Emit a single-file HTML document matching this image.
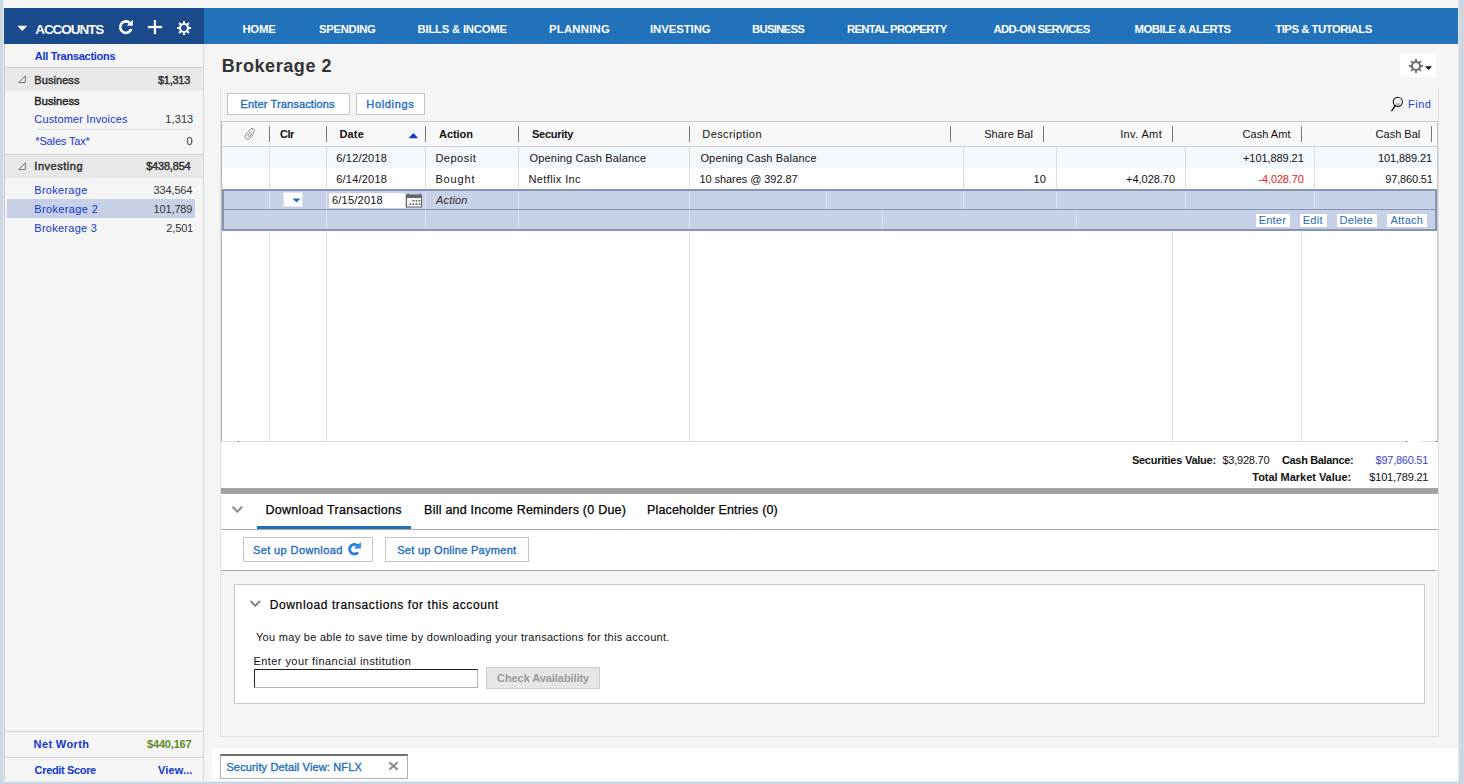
<!DOCTYPE html>
<html><head><meta charset="utf-8">
<style>
*{box-sizing:border-box;margin:0;padding:0}
html,body{width:1464px;height:784px;overflow:hidden;background:#f5f5f5;font-family:"Liberation Sans",sans-serif}
.a{position:absolute}
.t{position:absolute;white-space:nowrap;line-height:normal}
</style></head><body>
<!-- frame strips -->
<div class="a" style="left:0;top:0;width:3px;height:784px;background:#cdd7e1"></div>
<div class="a" style="left:3px;top:0;width:1px;height:782px;background:#e2ebf3"></div>
<div class="a" style="left:1459px;top:0;width:5px;height:784px;background:#cdd7e1"></div>
<div class="a" style="left:1458px;top:0;width:1px;height:782px;background:#e2ebf3"></div>
<div class="a" style="left:0;top:782px;width:1464px;height:2px;background:#cdd7e1"></div>
<div class="a" style="left:3px;top:781px;width:1456px;height:1px;background:#e2ebf3"></div>

<!-- header bars -->
<div class="a" style="left:4px;top:8px;width:200px;height:36px;background:#1a4a8b"></div>
<div class="a" style="left:204px;top:8px;width:1254px;height:36px;background:#2272bb"></div>
<!-- accounts triangle -->
<svg class="a" style="left:17px;top:25px" width="11" height="7" viewBox="0 0 11 7"><path d="M0.3 0.8 L10.3 0.8 L5.3 6 Z" fill="#fff"/></svg>
<!-- refresh -->
<svg class="a" style="left:116px;top:17px" width="20" height="20" viewBox="0 0 20 20">
<path d="M15.26 12.05 A5.7 5.7 0 1 1 14.14 6.29" fill="none" stroke="#fff" stroke-width="2.6"/>
<path d="M10.7 8.8 L16.9 8.8 L16.9 2.8 Z" fill="#fff"/>
</svg>
<!-- plus -->
<svg class="a" style="left:147px;top:19px" width="17" height="17" viewBox="0 0 17 17">
<rect x="0.8" y="6.9" width="14.3" height="2.3" fill="#fff"/><rect x="6.8" y="1" width="2.3" height="14.2" fill="#fff"/>
</svg>
<!-- gear white -->
<svg class="a" style="left:176px;top:20px" width="16" height="16" viewBox="0 0 16 16">
<g transform="translate(8,8)" fill="#fff">
<circle r="5.1"/>
<rect x="-1" y="-7" width="2" height="14"/>
<rect x="-1" y="-7" width="2" height="14" transform="rotate(45)"/>
<rect x="-1" y="-7" width="2" height="14" transform="rotate(90)"/>
<rect x="-1" y="-7" width="2" height="14" transform="rotate(135)"/>
<circle r="2.9" fill="#1a4a8b"/>
</g></svg>

<!-- sidebar -->
<div class="a" style="left:203px;top:44px;width:1px;height:737px;background:#d6d6d6"></div>
<div class="a" style="left:4px;top:67px;width:199px;height:1px;background:#cccccc"></div>
<div class="a" style="left:4px;top:68px;width:199px;height:23px;background:#e8e8e8"></div>
<div class="a" style="left:37px;top:129px;width:154px;height:1px;background:#d8d8d8"></div>
<div class="a" style="left:4px;top:154px;width:199px;height:1px;background:#d2d2d2"></div>
<div class="a" style="left:4px;top:155px;width:199px;height:23px;background:#e8e8e8"></div>
<div class="a" style="left:7px;top:199px;width:188px;height:19px;background:#c6d1e7"></div>
<svg class="a" style="left:18px;top:75px" width="9" height="9" viewBox="0 0 9 9"><path d="M7.4 0.8 L7.4 7.5 L0.8 7.5 Z" fill="none" stroke="#777" stroke-width="1"/></svg>
<svg class="a" style="left:18px;top:162px" width="9" height="9" viewBox="0 0 9 9"><path d="M7.4 0.8 L7.4 7.5 L0.8 7.5 Z" fill="none" stroke="#777" stroke-width="1"/></svg>
<div class="a" style="left:4px;top:731px;width:199px;height:1px;background:#d2d2d2"></div>
<div class="a" style="left:4px;top:757px;width:199px;height:1px;background:#d2d2d2"></div>

<!-- title gear button -->
<div class="a" style="left:1400px;top:54px;width:36px;height:23px;background:#fff"></div>
<svg class="a" style="left:1408px;top:58px" width="16" height="16" viewBox="0 0 16 16">
<g transform="translate(8,8)" fill="#707070">
<circle r="5.1"/>
<rect x="-1" y="-6.9" width="2" height="13.8"/>
<rect x="-1" y="-6.9" width="2" height="13.8" transform="rotate(45)"/>
<rect x="-1" y="-6.9" width="2" height="13.8" transform="rotate(90)"/>
<rect x="-1" y="-6.9" width="2" height="13.8" transform="rotate(135)"/>
<circle r="3" fill="#fff"/>
</g></svg>
<svg class="a" style="left:1425px;top:66px" width="8" height="6" viewBox="0 0 8 6"><path d="M0 0.2 L7 0.2 L3.5 4 Z" fill="#111"/></svg>

<!-- panel borders -->
<div class="a" style="left:220px;top:88px;width:1px;height:648px;background:#e0e0e0"></div>
<div class="a" style="left:1438px;top:88px;width:1px;height:648px;background:#e0e0e0"></div>
<div class="a" style="left:220px;top:736px;width:1219px;height:1px;background:#e0e0e0"></div>

<!-- toolbar buttons -->
<div class="a" style="left:227px;top:93px;width:123px;height:22px;background:#fff;border:1px solid #c4c4c4"></div>
<div class="a" style="left:356px;top:93px;width:69px;height:22px;background:#fff;border:1px solid #c4c4c4"></div>
<!-- find icon -->
<svg class="a" style="left:1390px;top:96px" width="14" height="17" viewBox="0 0 14 17">
<circle cx="7.8" cy="5.8" r="4.6" fill="none" stroke="#111" stroke-width="1.1"/>
<path d="M6 7.6 Q7.8 9 9.6 7.6" fill="none" stroke="#555" stroke-width="0.8"/>
<path d="M5.2 9.6 L1.9 14.6" stroke="#111" stroke-width="1.5" stroke-linecap="round"/>
</svg>

<!-- table -->
<div class="a" style="left:221px;top:121px;width:1217px;height:321px;background:#fff;border:1px solid #c8c8c8;border-left:1px solid #b8b8b8;border-bottom:1px solid #dcdcdc"></div>
<div class="a" style="left:222px;top:122px;width:1215px;height:24px;background:#f8f8f8"></div>
<div class="a" style="left:222px;top:146px;width:1215px;height:1px;background:#cfcfcf"></div>
<div class="a" style="left:222px;top:147px;width:1215px;height:21px;background:#f3f8fc"></div>
<!-- header separators -->
<div class="a" style="left:269px;top:126px;width:1px;height:16px;background:#777"></div>
<div class="a" style="left:326px;top:126px;width:1px;height:16px;background:#777"></div>
<div class="a" style="left:425px;top:126px;width:1px;height:16px;background:#777"></div>
<div class="a" style="left:518px;top:126px;width:1px;height:16px;background:#777"></div>
<div class="a" style="left:689px;top:126px;width:1px;height:16px;background:#777"></div>
<div class="a" style="left:950px;top:126px;width:1px;height:16px;background:#777"></div>
<div class="a" style="left:1043px;top:126px;width:1px;height:16px;background:#777"></div>
<div class="a" style="left:1172px;top:126px;width:1px;height:16px;background:#777"></div>
<div class="a" style="left:1301px;top:126px;width:1px;height:16px;background:#777"></div>
<div class="a" style="left:1431px;top:126px;width:1px;height:16px;background:#777"></div>
<!-- paperclip -->
<svg class="a" style="left:238px;top:122px" width="20" height="22" viewBox="0 0 20 22">
<path d="M15.6 12.3 L11.7 16.3 A2.7 2.7 0 0 1 7.5 12.9 L12.7 7.2 A2.1 2.1 0 0 1 16.0 9.9 L11.9 14.2 A1.1 1.1 0 0 1 10.3 12.7 L13.2 9.6" fill="none" stroke="#7a7a7a" stroke-width="0.9"/>
</svg>
<!-- sort arrow -->
<svg class="a" style="left:408px;top:132px" width="11" height="7" viewBox="0 0 11 7"><path d="M0.6 6.3 L10.2 6.3 L5.4 1 Z" fill="#0b3cc4"/></svg>

<!-- body column lines rows -->
<div class="a" style="left:269px;top:147px;width:1px;height:42px;background:#dcdcdc"></div>
<div class="a" style="left:326px;top:147px;width:1px;height:42px;background:#dcdcdc"></div>
<div class="a" style="left:425px;top:147px;width:1px;height:42px;background:#dcdcdc"></div>
<div class="a" style="left:518px;top:147px;width:1px;height:42px;background:#dcdcdc"></div>
<div class="a" style="left:689px;top:147px;width:1px;height:42px;background:#dcdcdc"></div>
<div class="a" style="left:963px;top:147px;width:1px;height:42px;background:#dcdcdc"></div>
<div class="a" style="left:1056px;top:147px;width:1px;height:42px;background:#dcdcdc"></div>
<div class="a" style="left:1185px;top:147px;width:1px;height:42px;background:#dcdcdc"></div>
<div class="a" style="left:1314px;top:147px;width:1px;height:42px;background:#dcdcdc"></div>
<!-- body column lines below edit -->
<div class="a" style="left:269px;top:230px;width:1px;height:211px;background:#dcdcdc"></div>
<div class="a" style="left:326px;top:230px;width:1px;height:211px;background:#dcdcdc"></div>
<div class="a" style="left:689px;top:230px;width:1px;height:211px;background:#dcdcdc"></div>
<div class="a" style="left:1172px;top:230px;width:1px;height:211px;background:#dcdcdc"></div>
<div class="a" style="left:1301px;top:230px;width:1px;height:211px;background:#dcdcdc"></div>

<!-- edit area -->
<div class="a" style="left:222px;top:189px;width:1215px;height:42px;background:#c7d1e8;border:2px solid #8796b0"></div>
<div class="a" style="left:224px;top:209px;width:1211px;height:1px;background:#8796b0"></div>
<div class="a" style="left:269px;top:191px;width:1px;height:18px;background:#dde2ee"></div>
<div class="a" style="left:326px;top:191px;width:1px;height:18px;background:#dde2ee"></div>
<div class="a" style="left:425px;top:191px;width:1px;height:18px;background:#dde2ee"></div>
<div class="a" style="left:518px;top:191px;width:1px;height:18px;background:#dde2ee"></div>
<div class="a" style="left:689px;top:191px;width:1px;height:18px;background:#dde2ee"></div>
<div class="a" style="left:826px;top:191px;width:1px;height:18px;background:#dde2ee"></div>
<div class="a" style="left:963px;top:191px;width:1px;height:18px;background:#dde2ee"></div>
<div class="a" style="left:1056px;top:191px;width:1px;height:18px;background:#dde2ee"></div>
<div class="a" style="left:1185px;top:191px;width:1px;height:18px;background:#dde2ee"></div>
<div class="a" style="left:1314px;top:191px;width:1px;height:18px;background:#dde2ee"></div>
<div class="a" style="left:326px;top:210px;width:1px;height:19px;background:#dde2ee"></div>
<div class="a" style="left:425px;top:210px;width:1px;height:19px;background:#dde2ee"></div>
<div class="a" style="left:518px;top:210px;width:1px;height:19px;background:#dde2ee"></div>
<div class="a" style="left:689px;top:210px;width:1px;height:19px;background:#dde2ee"></div>
<div class="a" style="left:882px;top:210px;width:1px;height:19px;background:#dde2ee"></div>
<div class="a" style="left:1076px;top:210px;width:1px;height:19px;background:#dde2ee"></div>
<!-- clr dropdown -->
<div class="a" style="left:283px;top:192px;width:20px;height:15px;background:#fff;border:1px solid #dfe3ea"></div>
<svg class="a" style="left:292px;top:198px" width="9" height="5" viewBox="0 0 9 5"><path d="M0.5 0.5 L8.5 0.5 L4.5 4.6 Z" fill="#2a6cc0"/></svg>
<!-- date input -->
<div class="a" style="left:329px;top:193px;width:76px;height:15px;background:#fff"></div>
<svg class="a" style="left:405px;top:193px" width="18" height="15" viewBox="0 0 18 15">
<rect x="1.5" y="2" width="15" height="12" fill="#fafafa" stroke="#666" stroke-width="1"/>
<rect x="1.5" y="2" width="15" height="3" fill="#666"/>
<rect x="2.6" y="0.5" width="1.2" height="2" fill="#666"/><rect x="14.2" y="0.5" width="1.2" height="2" fill="#666"/>
<g fill="#666"><rect x="7.5" y="7" width="1.8" height="1.6"/><rect x="10.6" y="7" width="1.8" height="1.6"/><rect x="13.6" y="7" width="1.8" height="1.6"/>
<rect x="4.4" y="10.4" width="1.8" height="1.6"/><rect x="7.5" y="10.4" width="1.8" height="1.6"/><rect x="10.6" y="10.4" width="1.8" height="1.6"/><rect x="13.6" y="10.4" width="1.8" height="1.6"/></g>
</svg>
<!-- edit buttons -->
<div class="a" style="left:1255px;top:213px;width:36px;height:15px;background:#fff;border:1px solid #c8cfdc"></div>
<div class="a" style="left:1299px;top:213px;width:29px;height:15px;background:#fff;border:1px solid #c8cfdc"></div>
<div class="a" style="left:1336px;top:213px;width:42px;height:15px;background:#fff;border:1px solid #c8cfdc"></div>
<div class="a" style="left:1386px;top:213px;width:42px;height:15px;background:#fff;border:1px solid #c8cfdc"></div>

<!-- summary -->
<div class="a" style="left:221px;top:442px;width:1217px;height:46px;background:#fff"></div>
<div class="a" style="left:221px;top:488px;width:1217px;height:6px;background:#a2a2a2"></div>
<!-- tabs area -->
<div class="a" style="left:221px;top:494px;width:1217px;height:77px;background:#fff"></div>
<div class="a" style="left:221px;top:529px;width:1217px;height:1px;background:#a8a8a8"></div>
<div class="a" style="left:257px;top:526px;width:154px;height:3px;background:#2272bb"></div>
<div class="a" style="left:221px;top:570px;width:1216px;height:1px;background:#a8a8a8"></div>
<svg class="a" style="left:231px;top:505px" width="13" height="9" viewBox="0 0 13 9"><path d="M1.5 1.8 L6.3 6.6 L11.1 1.8" fill="none" stroke="#8a8a8a" stroke-width="2"/></svg>
<div class="a" style="left:243px;top:537px;width:130px;height:25px;background:#fff;border:1px solid #c4c4c4"></div>
<div class="a" style="left:385px;top:537px;width:144px;height:25px;background:#fff;border:1px solid #c4c4c4"></div>
<svg class="a" style="left:344px;top:538px" width="22" height="22" viewBox="0 0 22 22">
<path d="M14.08 14.29 A4.8 4.8 0 1 1 14.18 8.24" fill="none" stroke="#2480de" stroke-width="2.8"/>
<path d="M9.8 10.6 L16.9 10.6 L16.9 4.1 Z" fill="#2a8ae8"/>
</svg>

<!-- download box -->
<div class="a" style="left:234px;top:584px;width:1191px;height:120px;background:#fff;border:1px solid #c8c8c8"></div>
<svg class="a" style="left:249px;top:599px" width="13" height="10" viewBox="0 0 13 10"><path d="M1.5 2 L6.3 6.8 L11.1 2" fill="none" stroke="#8a8a8a" stroke-width="2"/></svg>
<div class="a" style="left:254px;top:669px;width:224px;height:19px;background:#fff;border:1px solid #b0b0b0;border-top:1px solid #222;border-left:1px solid #222"></div>
<div class="a" style="left:486px;top:667px;width:114px;height:22px;background:#e6e6e6;border:1px solid #cdcdcd"></div>

<!-- bottom strip & tab -->
<div class="a" style="left:212px;top:749px;width:1246px;height:32px;background:#fff"></div>
<div class="a" style="left:220px;top:754px;width:188px;height:25px;background:#fff;border:1px solid #b0b0b0;border-top:2px solid #717171"></div>
<svg class="a" style="left:388px;top:760px" width="11" height="11" viewBox="0 0 11 11"><path d="M1.3 2.2 L9.7 9.8 M9.7 2.2 L1.3 9.8" stroke="#8a8a8a" stroke-width="2"/></svg>

<div class="a" style="left:4px;top:44px;width:1px;height:737px;background:#cacaca"></div>
<div class="a" style="left:1408px;top:441px;width:13px;height:1px;background:#fff"></div>
<div class="a" style="left:1406px;top:441px;width:1px;height:1px;background:#555"></div>
<div class="a" style="left:1436px;top:441px;width:1px;height:1px;background:#555"></div>
<div class="a" style="left:238px;top:441px;width:1px;height:1px;background:#555"></div>

<span class="t" style="left:35.2px;top:21.8px;font-size:13.5px;font-weight:bold;font-style:normal;letter-spacing:-1.057px;color:#fff;-webkit-text-stroke:0px #fff">ACCOUNTS</span>
<span class="t" style="left:242.4px;top:23.4px;font-size:11.3px;font-weight:bold;font-style:normal;letter-spacing:-0.2px;color:#fff;-webkit-text-stroke:0px #fff">HOME</span>
<span class="t" style="left:318.9px;top:23.4px;font-size:11.3px;font-weight:bold;font-style:normal;letter-spacing:-0.286px;color:#fff;-webkit-text-stroke:0px #fff">SPENDING</span>
<span class="t" style="left:417.6px;top:23.4px;font-size:11.3px;font-weight:bold;font-style:normal;letter-spacing:-0.223px;color:#fff;-webkit-text-stroke:0px #fff">BILLS &amp; INCOME</span>
<span class="t" style="left:549px;top:23.4px;font-size:11.3px;font-weight:bold;font-style:normal;letter-spacing:0.257px;color:#fff;-webkit-text-stroke:0px #fff">PLANNING</span>
<span class="t" style="left:650px;top:23.4px;font-size:11.3px;font-weight:bold;font-style:normal;letter-spacing:-0.037px;color:#fff;-webkit-text-stroke:0px #fff">INVESTING</span>
<span class="t" style="left:752.1px;top:23.4px;font-size:11.3px;font-weight:bold;font-style:normal;letter-spacing:-0.729px;color:#fff;-webkit-text-stroke:0px #fff">BUSINESS</span>
<span class="t" style="left:847px;top:23.4px;font-size:11.3px;font-weight:bold;font-style:normal;letter-spacing:-0.693px;color:#fff;-webkit-text-stroke:0px #fff">RENTAL PROPERTY</span>
<span class="t" style="left:993.4px;top:23.4px;font-size:11.3px;font-weight:bold;font-style:normal;letter-spacing:-0.6px;color:#fff;-webkit-text-stroke:0px #fff">ADD-ON SERVICES</span>
<span class="t" style="left:1134.5px;top:23.4px;font-size:11.3px;font-weight:bold;font-style:normal;letter-spacing:-0.464px;color:#fff;-webkit-text-stroke:0px #fff">MOBILE &amp; ALERTS</span>
<span class="t" style="left:1275.2px;top:23.4px;font-size:11.3px;font-weight:bold;font-style:normal;letter-spacing:-0.46px;color:#fff;-webkit-text-stroke:0px #fff">TIPS &amp; TUTORIALS</span>
<span class="t" style="left:34.8px;top:50px;font-size:11px;font-weight:bold;font-style:normal;letter-spacing:-0.28px;color:#1236cf;-webkit-text-stroke:0px #1236cf">All Transactions</span>
<span class="t" style="left:34.3px;top:74px;font-size:11px;font-weight:normal;font-style:normal;letter-spacing:0.071px;color:#333;-webkit-text-stroke:0.45px #333">Business</span>
<span class="t" style="left:158px;top:74px;font-size:11px;font-weight:normal;font-style:normal;letter-spacing:-0.26px;color:#333;-webkit-text-stroke:0.45px #333">$1,313</span>
<span class="t" style="left:34.3px;top:94.9px;font-size:11px;font-weight:normal;font-style:normal;letter-spacing:0.086px;color:#222;-webkit-text-stroke:0.45px #222">Business</span>
<span class="t" style="left:34.3px;top:112.9px;font-size:11px;font-weight:normal;font-style:normal;letter-spacing:0.138px;color:#1236cf;-webkit-text-stroke:0px #1236cf">Customer Invoices</span>
<span class="t" style="left:165.3px;top:112.9px;font-size:11px;font-weight:normal;font-style:normal;letter-spacing:0.1px;color:#333;-webkit-text-stroke:0px #333">1,313</span>
<span class="t" style="left:35.3px;top:135px;font-size:11px;font-weight:normal;font-style:normal;letter-spacing:-0.15px;color:#1236cf;-webkit-text-stroke:0px #1236cf">*Sales Tax*</span>
<span class="t" style="left:186.5px;top:135px;font-size:11px;font-weight:normal;font-style:normal;letter-spacing:0.2px;color:#333;-webkit-text-stroke:0px #333">0</span>
<span class="t" style="left:34.3px;top:160px;font-size:11px;font-weight:normal;font-style:normal;letter-spacing:0.525px;color:#333;-webkit-text-stroke:0.45px #333">Investing</span>
<span class="t" style="left:146.2px;top:160px;font-size:11px;font-weight:normal;font-style:normal;letter-spacing:-0.2px;color:#333;-webkit-text-stroke:0.45px #333">$438,854</span>
<span class="t" style="left:34.3px;top:184px;font-size:11px;font-weight:normal;font-style:normal;letter-spacing:0.275px;color:#1236cf;-webkit-text-stroke:0px #1236cf">Brokerage</span>
<span class="t" style="left:153.5px;top:184px;font-size:11px;font-weight:normal;font-style:normal;letter-spacing:-0.133px;color:#333;-webkit-text-stroke:0px #333">334,564</span>
<span class="t" style="left:34.3px;top:203px;font-size:11px;font-weight:normal;font-style:normal;letter-spacing:0.36px;color:#1236cf;-webkit-text-stroke:0px #1236cf">Brokerage 2</span>
<span class="t" style="left:153.5px;top:203px;font-size:11px;font-weight:normal;font-style:normal;letter-spacing:-0.133px;color:#333;-webkit-text-stroke:0px #333">101,789</span>
<span class="t" style="left:34.3px;top:222px;font-size:11px;font-weight:normal;font-style:normal;letter-spacing:0.26px;color:#1236cf;-webkit-text-stroke:0px #1236cf">Brokerage 3</span>
<span class="t" style="left:166.3px;top:222px;font-size:11px;font-weight:normal;font-style:normal;letter-spacing:-0.15px;color:#333;-webkit-text-stroke:0px #333">2,501</span>
<span class="t" style="left:33.6px;top:738px;font-size:11px;font-weight:bold;font-style:normal;letter-spacing:0.375px;color:#1236cf;-webkit-text-stroke:0px #1236cf">Net Worth</span>
<span class="t" style="left:147px;top:738px;font-size:11px;font-weight:bold;font-style:normal;letter-spacing:-0.171px;color:#5b8a1f;-webkit-text-stroke:0px #5b8a1f">$440,167</span>
<span class="t" style="left:34.6px;top:764px;font-size:11px;font-weight:bold;font-style:normal;letter-spacing:-0.345px;color:#1236cf;-webkit-text-stroke:0px #1236cf">Credit Score</span>
<span class="t" style="left:158px;top:764px;font-size:11px;font-weight:bold;font-style:normal;letter-spacing:0.133px;color:#1236cf;-webkit-text-stroke:0px #1236cf">View...</span>
<span class="t" style="left:221.8px;top:56px;font-size:18px;font-weight:bold;font-style:normal;letter-spacing:0.57px;color:#333;-webkit-text-stroke:0px #333">Brokerage 2</span>
<span class="t" style="left:240.5px;top:98px;font-size:11px;font-weight:normal;font-style:normal;letter-spacing:0.141px;color:#1e6cc0;-webkit-text-stroke:0.35px #1e6cc0">Enter Transactions</span>
<span class="t" style="left:366.3px;top:98px;font-size:11px;font-weight:normal;font-style:normal;letter-spacing:0.671px;color:#1e6cc0;-webkit-text-stroke:0.35px #1e6cc0">Holdings</span>
<span class="t" style="left:1408px;top:97.7px;font-size:11px;font-weight:normal;font-style:normal;letter-spacing:0.5px;color:#2a3bd0;-webkit-text-stroke:0px #2a3bd0">Find</span>
<span class="t" style="left:280px;top:128.2px;font-size:11px;font-weight:bold;font-style:normal;letter-spacing:-0.5px;color:#111111;-webkit-text-stroke:0px #111111">Clr</span>
<span class="t" style="left:339.4px;top:128.2px;font-size:11px;font-weight:bold;font-style:normal;letter-spacing:0.2px;color:#111111;-webkit-text-stroke:0px #111111">Date</span>
<span class="t" style="left:439.1px;top:128.2px;font-size:11px;font-weight:bold;font-style:normal;letter-spacing:-0.08px;color:#111111;-webkit-text-stroke:0px #111111">Action</span>
<span class="t" style="left:532px;top:128.2px;font-size:11px;font-weight:bold;font-style:normal;letter-spacing:-0.286px;color:#111111;-webkit-text-stroke:0px #111111">Security</span>
<span class="t" style="left:702.3px;top:128.2px;font-size:11px;font-weight:normal;font-style:normal;letter-spacing:0.42px;color:#111111;-webkit-text-stroke:0px #111111">Description</span>
<span class="t" style="left:984.2px;top:128.2px;font-size:11px;font-weight:normal;font-style:normal;letter-spacing:0.062px;color:#111111;-webkit-text-stroke:0px #111111">Share Bal</span>
<span class="t" style="left:1120.2px;top:128.2px;font-size:11px;font-weight:normal;font-style:normal;letter-spacing:0.371px;color:#111111;-webkit-text-stroke:0px #111111">Inv. Amt</span>
<span class="t" style="left:1242.5px;top:128.2px;font-size:11px;font-weight:normal;font-style:normal;letter-spacing:0.043px;color:#111111;-webkit-text-stroke:0px #111111">Cash Amt</span>
<span class="t" style="left:1375.6px;top:128.2px;font-size:11px;font-weight:normal;font-style:normal;letter-spacing:0.0px;color:#111111;-webkit-text-stroke:0px #111111">Cash Bal</span>
<span class="t" style="left:336.2px;top:152px;font-size:11px;font-weight:normal;font-style:normal;letter-spacing:0.225px;color:#111111;-webkit-text-stroke:0px #111111">6/12/2018</span>
<span class="t" style="left:435.4px;top:152px;font-size:11px;font-weight:normal;font-style:normal;letter-spacing:0.517px;color:#111111;-webkit-text-stroke:0px #111111">Deposit</span>
<span class="t" style="left:529.5px;top:152px;font-size:11px;font-weight:normal;font-style:normal;letter-spacing:0.184px;color:#111111;-webkit-text-stroke:0px #111111">Opening Cash Balance</span>
<span class="t" style="left:700.4px;top:152px;font-size:11px;font-weight:normal;font-style:normal;letter-spacing:0.158px;color:#111111;-webkit-text-stroke:0px #111111">Opening Cash Balance</span>
<span class="t" style="left:1243px;top:152px;font-size:11px;font-weight:normal;font-style:normal;letter-spacing:-0.07px;color:#111111;-webkit-text-stroke:0px #111111">+101,889.21</span>
<span class="t" style="left:1378px;top:152px;font-size:11px;font-weight:normal;font-style:normal;letter-spacing:-0.111px;color:#111111;-webkit-text-stroke:0px #111111">101,889.21</span>
<span class="t" style="left:336.2px;top:173px;font-size:11px;font-weight:normal;font-style:normal;letter-spacing:0.225px;color:#111111;-webkit-text-stroke:0px #111111">6/14/2018</span>
<span class="t" style="left:435.4px;top:173px;font-size:11px;font-weight:normal;font-style:normal;letter-spacing:0.84px;color:#111111;-webkit-text-stroke:0px #111111">Bought</span>
<span class="t" style="left:528.5px;top:173px;font-size:11px;font-weight:normal;font-style:normal;letter-spacing:0.38px;color:#111111;-webkit-text-stroke:0px #111111">Netflix Inc</span>
<span class="t" style="left:699.4px;top:173px;font-size:11px;font-weight:normal;font-style:normal;letter-spacing:-0.059px;color:#111111;-webkit-text-stroke:0px #111111">10 shares @ 392.87</span>
<span class="t" style="left:1033.4px;top:173px;font-size:11px;font-weight:normal;font-style:normal;letter-spacing:0.3px;color:#111111;-webkit-text-stroke:0px #111111">10</span>
<span class="t" style="left:1126.1px;top:173px;font-size:11px;font-weight:normal;font-style:normal;letter-spacing:-0.037px;color:#111111;-webkit-text-stroke:0px #111111">+4,028.70</span>
<span class="t" style="left:1258.6px;top:173px;font-size:11px;font-weight:normal;font-style:normal;letter-spacing:-0.162px;color:#e8201a;-webkit-text-stroke:0px #e8201a">-4,028.70</span>
<span class="t" style="left:1385.3px;top:173px;font-size:11px;font-weight:normal;font-style:normal;letter-spacing:-0.162px;color:#111111;-webkit-text-stroke:0px #111111">97,860.51</span>
<span class="t" style="left:332px;top:194px;font-size:11px;font-weight:normal;font-style:normal;letter-spacing:0.225px;color:#111111;-webkit-text-stroke:0px #111111">6/15/2018</span>
<span class="t" style="left:436px;top:194px;font-size:11px;font-weight:normal;font-style:italic;letter-spacing:0.18px;color:#333;-webkit-text-stroke:0px #333">Action</span>
<span class="t" style="left:1258.7px;top:214px;font-size:11px;font-weight:normal;font-style:normal;letter-spacing:0.225px;color:#1e6cc0;-webkit-text-stroke:0px #1e6cc0">Enter</span>
<span class="t" style="left:1302.7px;top:214px;font-size:11px;font-weight:normal;font-style:normal;letter-spacing:0.3px;color:#1e6cc0;-webkit-text-stroke:0px #1e6cc0">Edit</span>
<span class="t" style="left:1339.6px;top:214px;font-size:11px;font-weight:normal;font-style:normal;letter-spacing:0.24px;color:#1e6cc0;-webkit-text-stroke:0px #1e6cc0">Delete</span>
<span class="t" style="left:1390.5px;top:214px;font-size:11px;font-weight:normal;font-style:normal;letter-spacing:0.24px;color:#1e6cc0;-webkit-text-stroke:0px #1e6cc0">Attach</span>
<span class="t" style="left:1131.9px;top:454.1px;font-size:11px;font-weight:bold;font-style:normal;letter-spacing:-0.238px;color:#111111;-webkit-text-stroke:0px #111111">Securities Value:</span>
<span class="t" style="left:1222.4px;top:454.1px;font-size:11px;font-weight:normal;font-style:normal;letter-spacing:-0.225px;color:#111111;-webkit-text-stroke:0px #111111">$3,928.70</span>
<span class="t" style="left:1282px;top:454.1px;font-size:11px;font-weight:bold;font-style:normal;letter-spacing:-0.35px;color:#111111;-webkit-text-stroke:0px #111111">Cash Balance:</span>
<span class="t" style="left:1375.6px;top:454.1px;font-size:11px;font-weight:normal;font-style:normal;letter-spacing:-0.256px;color:#3343d4;-webkit-text-stroke:0px #3343d4">$97,860.51</span>
<span class="t" style="left:1252.3px;top:471.1px;font-size:11px;font-weight:bold;font-style:normal;letter-spacing:-0.033px;color:#111111;-webkit-text-stroke:0px #111111">Total Market Value:</span>
<span class="t" style="left:1369.3px;top:471.1px;font-size:11px;font-weight:normal;font-style:normal;letter-spacing:-0.2px;color:#111111;-webkit-text-stroke:0px #111111">$101,789.21</span>
<span class="t" style="left:265.4px;top:503.2px;font-size:12.5px;font-weight:normal;font-style:normal;letter-spacing:0.31px;color:#000;-webkit-text-stroke:0.25px #000">Download Transactions</span>
<span class="t" style="left:424.1px;top:503.2px;font-size:12.5px;font-weight:normal;font-style:normal;letter-spacing:0.228px;color:#000;-webkit-text-stroke:0.25px #000">Bill and Income Reminders (0 Due)</span>
<span class="t" style="left:647px;top:503.2px;font-size:12.5px;font-weight:normal;font-style:normal;letter-spacing:0.164px;color:#000;-webkit-text-stroke:0.25px #000">Placeholder Entries (0)</span>
<span class="t" style="left:252.9px;top:544.2px;font-size:11px;font-weight:normal;font-style:normal;letter-spacing:0.407px;color:#1e6cc0;-webkit-text-stroke:0.35px #1e6cc0">Set up Download</span>
<span class="t" style="left:397.2px;top:544.2px;font-size:11px;font-weight:normal;font-style:normal;letter-spacing:0.29px;color:#1e6cc0;-webkit-text-stroke:0.35px #1e6cc0">Set up Online Payment</span>
<span class="t" style="left:269.8px;top:597.7px;font-size:12px;font-weight:normal;font-style:normal;letter-spacing:0.6px;color:#000;-webkit-text-stroke:0.2px #000">Download transactions for this account</span>
<span class="t" style="left:256px;top:631px;font-size:11px;font-weight:normal;font-style:normal;letter-spacing:0.288px;color:#111111;-webkit-text-stroke:0px #111111">You may be able to save time by downloading your transactions for this account.</span>
<span class="t" style="left:253.4px;top:655px;font-size:11px;font-weight:normal;font-style:normal;letter-spacing:0.445px;color:#111111;-webkit-text-stroke:0px #111111">Enter your financial institution</span>
<span class="t" style="left:497px;top:671.5px;font-size:11px;font-weight:bold;font-style:normal;letter-spacing:-0.065px;color:#9a9a9a;-webkit-text-stroke:0px #9a9a9a">Check Availability</span>
<span class="t" style="left:226.4px;top:760.8px;font-size:11px;font-weight:normal;font-style:normal;letter-spacing:0.14px;color:#1f6fbd;-webkit-text-stroke:0.35px #1f6fbd">Security Detail View: NFLX</span>
</body></html>
